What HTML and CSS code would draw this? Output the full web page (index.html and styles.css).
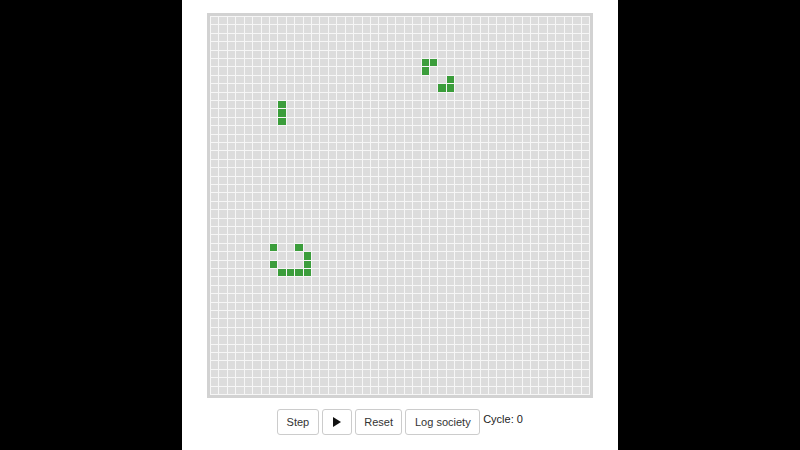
FILE: index.html
```html
<!DOCTYPE html>
<html>
<head>
<meta charset="utf-8">
<link rel="stylesheet" href="styles.css">
</head>
<body>
<div class="page">
  <div class="board" id="board"></div>
  <div class="controls">
    <button class="btn">Step</button>
    <button class="btn btn-play"><svg width="8" height="10" viewBox="0 0 8 10"><path d="M0 0 L8 5 L0 10 Z" fill="#111"/></svg></button>
    <button class="btn">Reset</button>
    <button class="btn">Log society</button>
    <span class="cycle">Cycle: 0</span>
  </div>
</div>
<script src="script.js"></script>
</body>
</html>
```

FILE: styles.css
```css
html, body {
  margin: 0;
  padding: 0;
  background: #000;
  height: 100%;
}
.page {
  width: 436px;
  height: 450px;
  margin: 0 auto;
  background: #fff;
  display: flex;
  flex-direction: column;
  align-items: center;
  padding-top: 13px;
  box-sizing: border-box;
  font-family: "Liberation Sans", Arial, sans-serif;
}
.board {
  width: 378px;
  height: 377px;
  border: 3px solid #d2d2d2;
  padding: 1px;
  background: #f6f6f6;
  display: grid;
  grid-template-columns: repeat(45, 1fr);
  grid-template-rows: repeat(45, 1fr);
  gap: 1px;
}
.cell {
  background: #dcdcdc;
}
.cell.alive {
  background: #3b9d3b;
}
.controls {
  margin-top: 11px;
  display: flex;
  align-items: flex-start;
  gap: 3px;
}
.btn {
  height: 26px;
  padding: 0 8.5px;
  border: 1px solid #cccccc;
  border-radius: 3px;
  background: #fff;
  font-family: "Liberation Sans", Arial, sans-serif;
  font-size: 11px;
  color: #333;
  display: flex;
  align-items: center;
  justify-content: center;
}
.btn-play {
  width: 30px;
  padding: 0;
}
.cycle {
  font-size: 11px;
  color: #222;
  margin-top: 4px;
}
```

FILE: script.js
```js
var board = document.getElementById('board');
var alive = [
  [25,5],[26,5],[25,6],[28,7],[27,8],[28,8],
  [8,10],[8,11],[8,12],
  [7,27],[10,27],[11,28],[7,29],[11,29],[8,30],[9,30],[10,30],[11,30]
];
var set = {};
alive.forEach(function (p) { set[p[0] + ',' + p[1]] = true; });
var frag = document.createDocumentFragment();
for (var r = 0; r < 45; r++) {
  for (var c = 0; c < 45; c++) {
    var d = document.createElement('div');
    d.className = set[c + ',' + r] ? 'cell alive' : 'cell';
    frag.appendChild(d);
  }
}
board.appendChild(frag);
```
